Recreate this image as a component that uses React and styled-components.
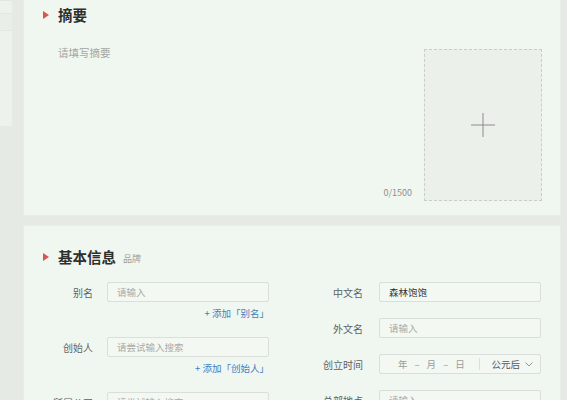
import styled, { createGlobalStyle } from "styled-components"

const GlobalStyle = createGlobalStyle`
    html, body {
        margin: 0;
        padding: 0;
        background: #e5eae5;
        font-family: "Noto Sans CJK SC", "Noto Sans", sans-serif;
    }
`

const Page = styled.div`
    display: flex;
    align-items: flex-start;
    height: 400px;
    overflow: hidden;
`

const Sidebar = styled.div`
    width: 12px;
    height: 126px;
    flex-shrink: 0;
    background: #edf2ed;
    border-top: 1px solid #e2e7e2;
    box-sizing: border-box;
    display: flex;
    flex-direction: column;
`

const SideItem = styled.div`
    height: 16px;
    margin-top: 12px;
    border-top: 1px solid #e3e8e3;
    border-bottom: 1px solid #e3e8e3;
    background: #e9eee9;
`

const Main = styled.div`
    margin-left: 12px;
    width: 536px;
    display: flex;
    flex-direction: column;
    gap: 11px;
`

const Card = styled.div`
    background: #f0f6f0;
    box-shadow: 0 0 0 1px #e8ede8;
    padding: ${props => props.padding};
    box-sizing: border-box;
    height: ${props => props.height || "auto"};
`

const TitleRow = styled.div`
    display: flex;
    align-items: center;
    height: 18px;
`

const Caret = styled.span`
    width: 0;
    height: 0;
    border-top: 4px solid transparent;
    border-bottom: 4px solid transparent;
    border-left: 6px solid #d9534f;
    margin-right: 9px;
`

const Title = styled.h2`
    margin: 0;
    font-size: 14.5px;
    font-weight: 700;
    color: #2d2f2d;
    line-height: 18px;
`

const SubTitle = styled.span`
    font-size: 9px;
    color: #9a9d9a;
    margin-left: 7px;
    margin-top: 3px;
`

const SummaryBody = styled.div`
    display: flex;
    margin-top: 23px;
    gap: 12px;
`

const TextArea = styled.div`
    flex: 1;
    display: flex;
    flex-direction: column;
    justify-content: space-between;
    padding-left: 15px;
    padding-bottom: 2px;
`

const Placeholder = styled.span`
    font-size: 10.5px;
    line-height: 12px;
    color: #a3a6a3;
`

const Counter = styled.span`
    align-self: flex-end;
    font-size: 9px;
    line-height: 12px;
    color: #8c8f8c;
`

const Upload = styled.div`
    width: 118px;
    height: 152px;
    margin-top: 2px;
    border: 1px dashed #c9cec9;
    background: #ebf0eb;
    box-sizing: border-box;
    display: flex;
    align-items: center;
    justify-content: center;
`

const Form = styled.div`
    display: flex;
    margin-top: 16px;
`

const Column = styled.div`
    display: flex;
    flex-direction: column;
    gap: ${props => props.gap};
`

const Group = styled.div`
    display: flex;
    flex-direction: column;
`

const Field = styled.div`
    display: flex;
    align-items: center;
    gap: ${props => props.gap};
`

const Label = styled.span`
    width: ${props => props.width};
    text-align: right;
    font-size: 10px;
    color: #5f625f;
`

const Input = styled.div`
    width: 162px;
    height: 20px;
    box-sizing: border-box;
    border: 1px solid #dadfda;
    border-radius: 2px;
    background: #f3f8f3;
    display: flex;
    align-items: center;
    padding: 0 9px;
    font-size: 9.5px;
    color: ${props => props.filled ? "#333" : "#a9aca9"};
`

const AddLink = styled.span`
    align-self: flex-end;
    margin-top: 5px;
    font-size: 9.5px;
    line-height: 12px;
    color: #3f7fc0;
`

const DateInput = styled(Input)`
    padding: 0 7px 0 18px;
    gap: 7px;
`

const DatePart = styled.span`
    color: #9a9d9a;
`

const Divider = styled.span`
    width: 1px;
    height: 12px;
    background: #dadfda;
    margin: 0 4px 0 auto;
`

const Era = styled.span`
    display: flex;
    align-items: center;
    gap: 5px;
    color: #555;
`

const Field1 = ({ label, children }) => (
    <Field gap="14px">
        <Label width="69px">{label}</Label>
        {children}
    </Field>
)

const Field2 = ({ label, children }) => (
    <Field gap="16px">
        <Label width="94px">{label}</Label>
        {children}
    </Field>
)

const App = () => {
    return (
        <Page>
            <GlobalStyle />
            <Sidebar>
                <SideItem />
            </Sidebar>
            <Main>
                <Card height="215px" padding="6px 18px 14px 19px">
                    <TitleRow>
                        <Caret />
                        <Title>摘要</Title>
                    </TitleRow>
                    <SummaryBody>
                        <TextArea>
                            <Placeholder>请填写摘要</Placeholder>
                            <Counter>0/1500</Counter>
                        </TextArea>
                        <Upload>
                            <svg width="24" height="24" viewBox="0 0 24 24">
                                <path d="M12 0V24M0 12H24" stroke="#8a8d8a" strokeWidth="1" fill="none" />
                            </svg>
                        </Upload>
                    </SummaryBody>
                </Card>
                <Card padding="22px 18px 0 0" height="200px">
                    <TitleRow style={{ paddingLeft: 19 }}>
                        <Caret />
                        <Title>基本信息</Title>
                        <SubTitle>品牌</SubTitle>
                    </TitleRow>
                    <Form>
                        <Column gap="18px">
                            <Group>
                                <Field1 label="别名">
                                    <Input>请输入</Input>
                                </Field1>
                                <AddLink>+ 添加「别名」</AddLink>
                            </Group>
                            <Group>
                                <Field1 label="创始人">
                                    <Input>请尝试输入搜索</Input>
                                </Field1>
                                <AddLink>+ 添加「创始人」</AddLink>
                            </Group>
                            <Group>
                                <Field1 label="所属公司">
                                    <Input>请尝试输入搜索</Input>
                                </Field1>
                            </Group>
                        </Column>
                        <Column gap="16px">
                            <Field2 label="中文名">
                                <Input filled>森林饱饱</Input>
                            </Field2>
                            <Field2 label="外文名">
                                <Input>请输入</Input>
                            </Field2>
                            <Field2 label="创立时间">
                                <DateInput>
                                    <DatePart>年</DatePart>
                                    <DatePart>–</DatePart>
                                    <DatePart>月</DatePart>
                                    <DatePart>–</DatePart>
                                    <DatePart>日</DatePart>
                                    <Divider />
                                    <Era>
                                        公元后
                                        <svg width="8" height="5" viewBox="0 0 8 5">
                                            <path d="M0.5 0.5L4 4L7.5 0.5" stroke="#999" strokeWidth="1" fill="none" />
                                        </svg>
                                    </Era>
                                </DateInput>
                            </Field2>
                            <Field2 label="总部地点">
                                <Input>请输入</Input>
                            </Field2>
                        </Column>
                    </Form>
                </Card>
            </Main>
        </Page>
    )
}

export default App
